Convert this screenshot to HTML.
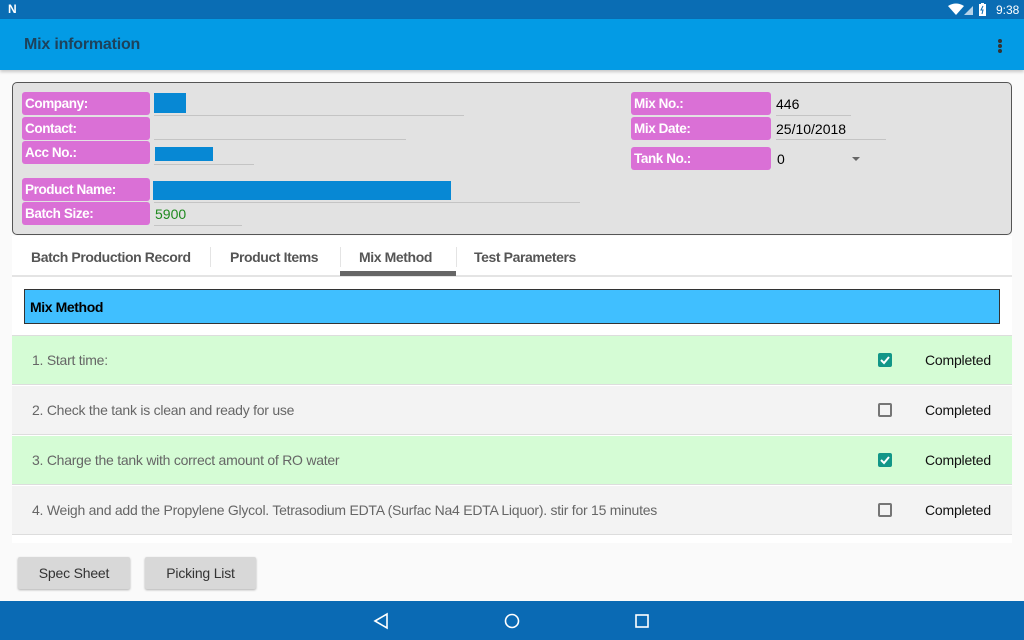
<!DOCTYPE html>
<html><head><style>
*{margin:0;padding:0;box-sizing:border-box}
body{width:1024px;height:640px;position:relative;overflow:hidden;background:#fafafa;font-family:"Liberation Sans",Roboto,sans-serif}
.a{position:absolute}
.lbl{position:absolute;background:#da70d6;color:#fff;font-weight:bold;font-size:13.5px;border-radius:3px;padding-left:3px;line-height:23px;letter-spacing:-0.4px}
.ul{position:absolute;height:1px;background:#c4c4c4}
.blue{position:absolute;background:#0788d4}
.val{position:absolute;font-size:14px;color:#000}
.tab{position:absolute;top:249px;font-size:14px;font-weight:bold;color:#555;letter-spacing:-0.4px}
.sep{position:absolute;top:247px;width:1px;height:20px;background:#e4e4e4}
.row{position:absolute;left:12px;width:1000px;height:49px;border-bottom:1px solid #ddd}
.row .t{position:absolute;left:20px;top:16px;font-size:14px;color:#666;letter-spacing:-0.25px}
.row .c{position:absolute;left:913px;top:16px;font-size:14px;color:#111;letter-spacing:-0.2px}
.cb{position:absolute;left:866px;top:17px;width:14px;height:14px;border:2px solid #757575;border-radius:2px}
.cb.on{background:#129688;border-color:#129688}
.btn{position:absolute;top:557px;height:32px;background:#d8d8d8;border-radius:2px;box-shadow:0 1px 2px rgba(0,0,0,.3);font-size:14px;color:#333;text-align:center;line-height:32px;letter-spacing:-0.2px}
</style></head><body>
<div class="a" style="left:0;top:0;width:1024px;height:19px;background:#0a6db4"></div>
<div class="a" style="left:8px;top:2px;color:#fff;font-weight:bold;font-size:12px">N</div>
<svg class="a" style="left:948px;top:3px" width="40" height="14"><path d="M0 3 Q8 -2 16 3 L8 12Z" fill="#fff"/><path d="M16 12 L25 3 L25 12Z" fill="#fff" opacity=".7"/><rect x="31" y="1" width="7" height="12" fill="#fff"/><rect x="33" y="0" width="3" height="2" fill="#fff"/><path d="M35 3 L33 7 L35 7 L34 11" stroke="#0a6db4" stroke-width="1" fill="none"/></svg>
<div class="a" style="left:996px;top:3px;color:#fff;font-size:12px">9:38</div>
<div class="a" style="left:0;top:19px;width:1024px;height:51px;background:#039be5;box-shadow:0 2px 3px rgba(0,0,0,.2)"></div>
<div class="a" style="left:24px;top:36px;font-size:16px;color:#223344;font-weight:bold;letter-spacing:-0.2px;opacity:.85">Mix information</div>
<div class="a" style="left:998px;top:39px;width:4px;height:4px;border-radius:2px;background:#333;box-shadow:0 5px 0 #333,0 10px 0 #333"></div>

<div class="a" style="left:12px;top:82px;width:1000px;height:153px;background:#e2e2e2;border:1px solid #555;border-radius:5px"></div>
<div class="lbl" style="left:22px;top:92px;width:128px">Company:</div>
<div class="lbl" style="left:22px;top:117px;width:128px">Contact:</div>
<div class="lbl" style="left:22px;top:141px;width:128px">Acc No.:</div>
<div class="lbl" style="left:22px;top:178px;width:128px">Product Name:</div>
<div class="lbl" style="left:22px;top:202px;width:128px">Batch Size:</div>
<div class="blue" style="left:154px;top:93px;width:32px;height:20px"></div><div class="ul" style="left:154px;top:115px;width:310px"></div>
<div class="ul" style="left:154px;top:139px;width:252px"></div>
<div class="blue" style="left:155px;top:147px;width:58px;height:14px"></div><div class="ul" style="left:154px;top:164px;width:100px"></div>
<div class="blue" style="left:153px;top:181px;width:298px;height:19px"></div><div class="ul" style="left:154px;top:202px;width:426px"></div>
<div class="val" style="left:155px;top:206px;color:#1e8a1e">5900</div><div class="ul" style="left:154px;top:225px;width:88px"></div>
<div class="lbl" style="left:631px;top:92px;width:140px">Mix No.:</div>
<div class="lbl" style="left:631px;top:117px;width:140px">Mix Date:</div>
<div class="lbl" style="left:631px;top:147px;width:140px">Tank No.:</div>
<div class="val" style="left:776px;top:96px">446</div><div class="ul" style="left:776px;top:115px;width:75px"></div>
<div class="val" style="left:776px;top:121px">25/10/2018</div><div class="ul" style="left:776px;top:139px;width:110px"></div>
<div class="val" style="left:777px;top:151px">0</div>
<div class="a" style="left:852px;top:157px;border-left:4px solid transparent;border-right:4px solid transparent;border-top:4px solid #666"></div>

<div class="a" style="left:12px;top:236px;width:1000px;height:365px;background:#fff"></div>
<div class="a" style="left:12px;top:275px;width:1000px;height:2px;background:#e4e4e4"></div>
<div class="tab" style="left:31px">Batch Production Record</div>
<div class="sep" style="left:210px"></div>
<div class="tab" style="left:230px">Product Items</div>
<div class="sep" style="left:340px"></div>
<div class="tab" style="left:359px">Mix Method</div>
<div class="sep" style="left:456px"></div>
<div class="tab" style="left:474px">Test Parameters</div>
<div class="a" style="left:340px;top:271px;width:116px;height:5px;background:#666"></div>
<div class="a" style="left:24px;top:289px;width:976px;height:35px;background:#40bfff;border:1px solid #333"></div>
<div class="a" style="left:30px;top:299px;font-size:14px;font-weight:bold;color:#000;letter-spacing:-0.4px">Mix Method</div>
<div class="a" style="left:12px;top:335px;width:1000px;height:1px;background:#ddd"></div>
<div class="row" style="top:336px;background:#d5fcd5"><div class="t">1. Start time:</div><div class="cb on"><svg width="10" height="10" style="position:absolute;left:0;top:0"><path d="M1 5 L4 8 L9 2" stroke="#fff" stroke-width="2" fill="none"/></svg></div><div class="c">Completed</div></div>
<div class="row" style="top:386px;background:#f3f3f3"><div class="t">2. Check the tank is clean and ready for use</div><div class="cb"></div><div class="c">Completed</div></div>
<div class="row" style="top:436px;background:#d5fcd5"><div class="t">3. Charge the tank with correct amount of RO water</div><div class="cb on"><svg width="10" height="10" style="position:absolute;left:0;top:0"><path d="M1 5 L4 8 L9 2" stroke="#fff" stroke-width="2" fill="none"/></svg></div><div class="c">Completed</div></div>
<div class="row" style="top:486px;background:#f3f3f3"><div class="t">4. Weigh and add the Propylene Glycol. Tetrasodium EDTA (Surfac Na4 EDTA Liquor). stir for 15 minutes</div><div class="cb"></div><div class="c">Completed</div></div>
<div class="a" style="left:0;top:543px;width:1024px;height:58px;background:#fafafa"></div>
<div class="btn" style="left:18px;width:112px">Spec Sheet</div>
<div class="btn" style="left:145px;width:111px">Picking List</div>
<div class="a" style="left:0;top:601px;width:1024px;height:39px;background:#0a6ab4"></div>
<svg class="a" style="left:370px;top:610px" width="290" height="22"><path d="M5 11 L17 4 L17 18Z" fill="none" stroke="#fff" stroke-width="1.6"/><circle cx="142" cy="11" r="6.5" fill="none" stroke="#fff" stroke-width="1.6"/><rect x="266" y="5" width="12" height="12" fill="none" stroke="#fff" stroke-width="1.6"/></svg>
</body></html>
